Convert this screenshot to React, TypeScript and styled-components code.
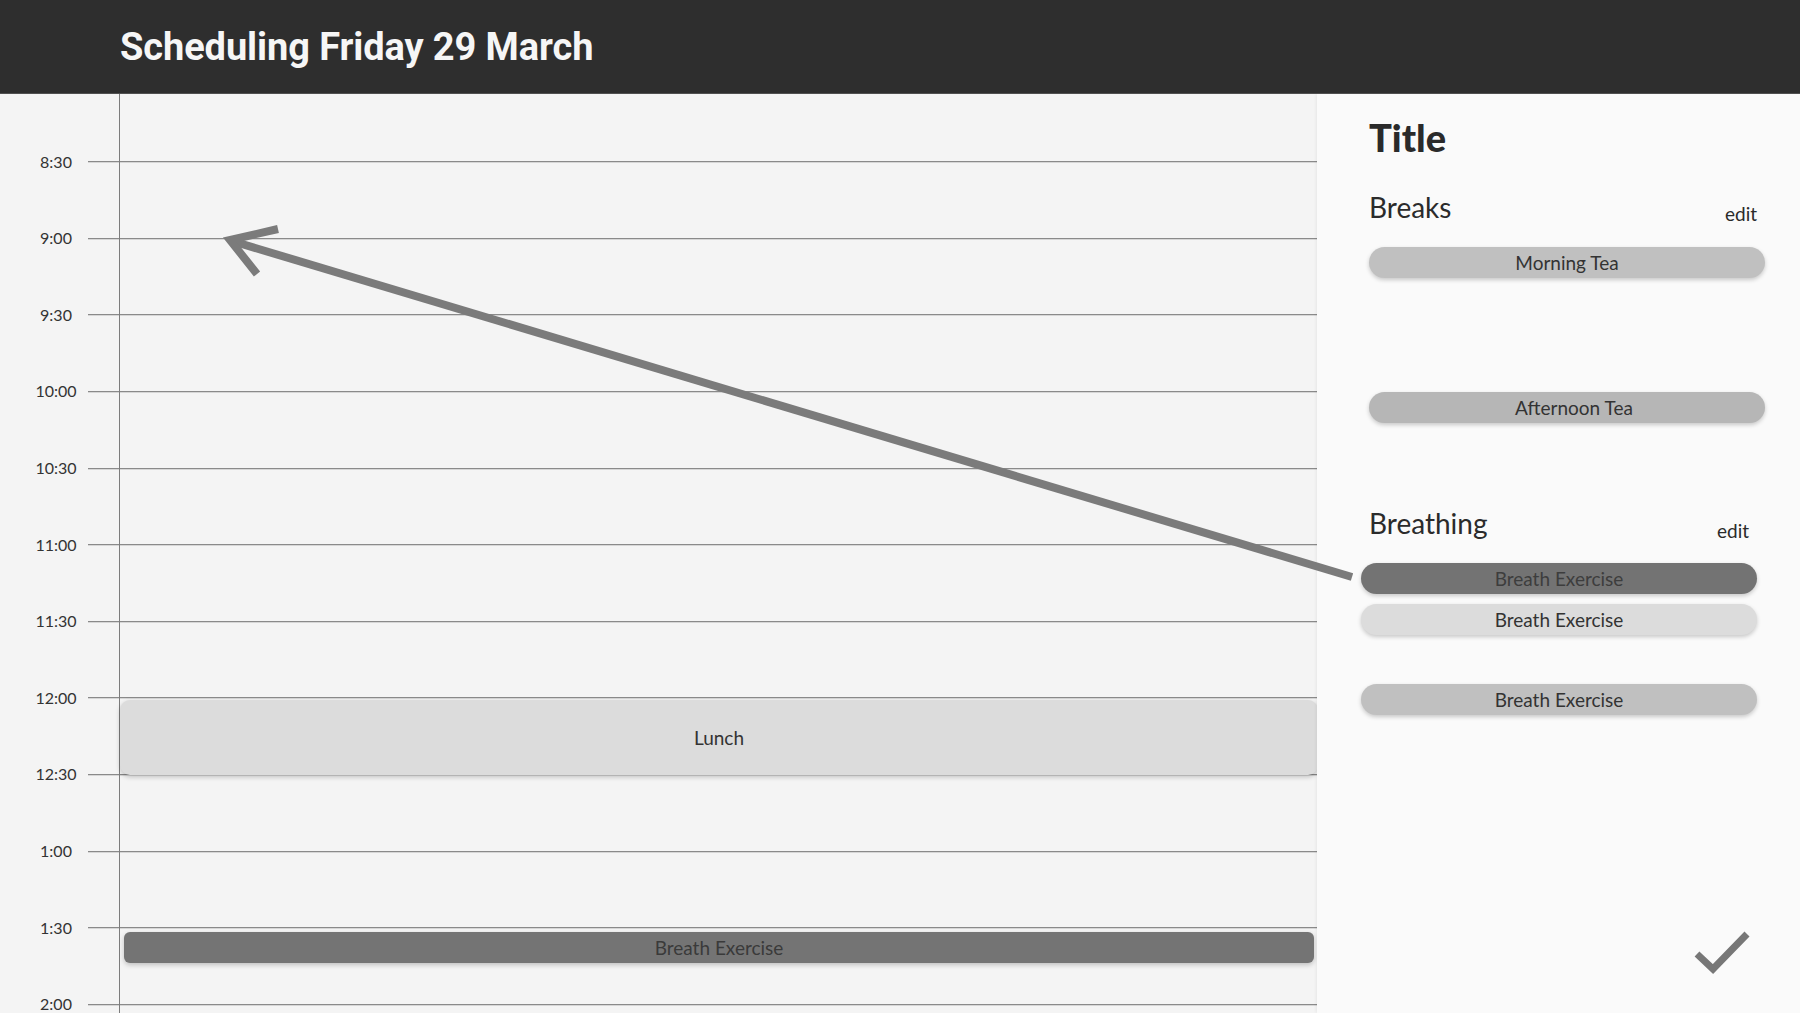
import React from "react";
import styled, { createGlobalStyle } from "styled-components";

const GlobalStyle = createGlobalStyle`
  html, body {
    margin: 0;
    padding: 0;
    background: #f4f4f4;
    font-family: "Lato", "Open Sans", sans-serif;
  }
  * { box-sizing: border-box; }
`;

const ROW = 76.6;
const TOP_PAD = 29.4;
const HOURS = ["8:30", "9:00", "9:30", "10:00", "10:30", "11:00", "11:30", "12:00", "12:30", "1:00", "1:30", "2:00"];

const lineY = (index: number) => TOP_PAD + index * ROW + ROW / 2;

type Tone = "dark" | "light" | "mid" | "midDark";

const toneBg: Record<Tone, string> = {
  dark: "#737373",
  light: "#dcdcdc",
  mid: "#c0c0c0",
  midDark: "#b6b6b6",
};

const Page = styled.div`
  width: 1800px;
  height: 1013px;
  display: flex;
  flex-direction: column;
  overflow: hidden;
`;

const Header = styled.header`
  height: 94px;
  flex: none;
  background: #2e2e2e;
  border-bottom: 1px solid #505050;
  display: flex;
  align-items: center;
  padding-left: 120px;
`;

const HeaderTitle = styled.h1`
  margin: 0;
  font-family: "Roboto", "Liberation Sans", sans-serif;
  font-weight: 700;
  font-size: 38px;
  line-height: 1;
  color: #f6f6f6;
  letter-spacing: -0.1px;
`;

const Body = styled.main`
  flex: 1;
  display: flex;
  position: relative;
  overflow: hidden;
`;

const Timeline = styled.section`
  width: 1317px;
  flex: none;
  position: relative;
  background: #f4f4f4;
  padding-top: ${TOP_PAD}px;
  display: flex;
  flex-direction: column;
`;

const HourRow = styled.div`
  height: ${ROW}px;
  flex: none;
  display: flex;
  align-items: center;
`;

const TimeLabel = styled.span`
  width: 88px;
  padding-left: 24px;
  text-align: center;
  font-family: "Lato", sans-serif;
  font-size: 16px;
  color: #333;
  line-height: 1;
`;

const HourLine = styled.div`
  flex: 1;
  height: 1px;
  background: #8a8a8a;
  box-shadow: 0 1px 0 #d6d6d6;
`;

const DayAxis = styled.div`
  position: absolute;
  left: 119px;
  top: 0;
  bottom: 0;
  width: 1px;
  background: #7c7c7c;
`;

const Event = styled.div<{ $tone: "lunch" | "breath" }>`
  position: absolute;
  left: ${(p) => (p.$tone === "lunch" ? "120px" : "124px")};
  right: ${(p) => (p.$tone === "lunch" ? "-1px" : "3px")};
  display: flex;
  align-items: center;
  justify-content: center;
  font-family: "Lato", sans-serif;
  font-size: 19px;
  color: ${(p) => (p.$tone === "lunch" ? "#333" : "#3a3a3a")};
  background: ${(p) => (p.$tone === "lunch" ? "#dcdcdc" : "#747474")};
  border-radius: ${(p) => (p.$tone === "lunch" ? "10px" : "6px")};
  box-shadow: 0 2px 5px rgba(0, 0, 0, 0.22);
`;

const Panel = styled.aside`
  flex: 1;
  position: relative;
  background: #fafafa;
  box-shadow: -1px 0 3px rgba(0, 0, 0, 0.06);
  padding: 21px 0 0 52px;
  display: flex;
  flex-direction: column;
`;

const PanelTitle = styled.h2`
  margin: 0;
  font-family: "Lato", sans-serif;
  font-weight: 900;
  font-size: 38px;
  line-height: 1.2;
  color: #2a2a2a;
`;

const Section = styled.div<{ $top: number }>`
  margin-top: ${(p) => p.$top}px;
  display: flex;
  flex-direction: column;
`;

const HeadRow = styled.div<{ $shift: number }>`
  width: 396px;
  padding-right: ${(p) => 8 + p.$shift}px;
  display: flex;
  justify-content: space-between;
  align-items: flex-end;
`;

const SectionName = styled.h3`
  margin: 0;
  font-family: "Lato", sans-serif;
  font-weight: 400;
  font-size: 28px;
  line-height: 1.2;
  color: #2b2b2b;
`;

const EditLink = styled.span`
  font-family: "Lato", sans-serif;
  font-size: 19px;
  line-height: 1.2;
  color: #2a2a2a;
  margin-bottom: -2px;
  cursor: pointer;
`;

const PillList = styled.div<{ $shift: number }>`
  display: flex;
  flex-direction: column;
  margin-left: ${(p) => -p.$shift}px;
`;

const Pill = styled.div<{ $tone: Tone; $gap: number; $nudge: number }>`
  width: 396px;
  height: 31px;
  margin-top: ${(p) => p.$gap}px;
  padding-left: ${(p) => p.$nudge}px;
  border-radius: 16px;
  background: ${(p) => toneBg[p.$tone]};
  box-shadow: 0 2px 4px rgba(0, 0, 0, 0.2);
  display: flex;
  align-items: center;
  justify-content: center;
  font-family: "Lato", sans-serif;
  font-size: 19px;
  color: ${(p) => (p.$tone === "dark" ? "#3d3d3d" : "#333")};
`;

const Footer = styled.div`
  margin-top: auto;
  display: flex;
  justify-content: flex-end;
  padding: 0 48px 37px 0;
`;

const ArrowLayer = styled.svg`
  position: absolute;
  left: 0;
  top: 0;
  pointer-events: none;
`;

type PillData = { label: string; tone: Tone; gap: number; nudge?: number };
type SectionData = { name: string; top: number; shift: number; pills: PillData[] };

const SECTIONS: SectionData[] = [
  {
    name: "Breaks",
    top: 30,
    shift: 0,
    pills: [
      { label: "Morning Tea", tone: "mid", gap: 23 },
      { label: "Afternoon Tea", tone: "midDark", gap: 114, nudge: 14 },
    ],
  },
  {
    name: "Breathing",
    top: 84,
    shift: 8,
    pills: [
      { label: "Breath Exercise", tone: "dark", gap: 22 },
      { label: "Breath Exercise", tone: "light", gap: 10 },
      { label: "Breath Exercise", tone: "mid", gap: 49 },
    ],
  },
];

const EVENTS = [
  { label: "Lunch", tone: "lunch" as const, index: 7, offset: 2, height: 75 },
  { label: "Breath Exercise", tone: "breath" as const, index: 10, offset: 4, height: 31 },
];

export default function App() {
  return (
    <>
      <GlobalStyle />
      <Page>
        <Header>
          <HeaderTitle>Scheduling Friday 29 March</HeaderTitle>
        </Header>
        <Body>
          <Timeline>
            {HOURS.map((h) => (
              <HourRow key={h}>
                <TimeLabel>{h}</TimeLabel>
                <HourLine />
              </HourRow>
            ))}
            <DayAxis />
            {EVENTS.map((e) => (
              <Event
                key={e.label}
                $tone={e.tone}
                style={{ top: lineY(e.index) + e.offset, height: e.height }}
              >
                {e.label}
              </Event>
            ))}
          </Timeline>
          <Panel>
            <PanelTitle>Title</PanelTitle>
            {SECTIONS.map((s) => (
              <Section key={s.name} $top={s.top}>
                <HeadRow $shift={s.shift}>
                  <SectionName>{s.name}</SectionName>
                  <EditLink>edit</EditLink>
                </HeadRow>
                <PillList $shift={s.shift}>
                  {s.pills.map((p, i) => (
                    <Pill key={i} $tone={p.tone} $gap={p.gap} $nudge={p.nudge ?? 0}>
                      {p.label}
                    </Pill>
                  ))}
                </PillList>
              </Section>
            ))}
            <Footer>
              <svg width="60" height="50" viewBox="0 0 60 50">
                <polyline
                  points="5,28 21,43 55,8"
                  fill="none"
                  stroke="#777"
                  strokeWidth="7"
                  strokeLinejoin="miter"
                />
              </svg>
            </Footer>
          </Panel>
          <ArrowLayer width="1800" height="919" viewBox="0 0 1800 919">
            <line x1="1352" y1="483" x2="232" y2="147" stroke="#7b7b7b" strokeWidth="8" />
            <polyline
              points="278,135 230,146 257,180"
              fill="none"
              stroke="#7b7b7b"
              strokeWidth="8"
              strokeLinejoin="miter"
            />
          </ArrowLayer>
        </Body>
      </Page>
    </>
  );
}
